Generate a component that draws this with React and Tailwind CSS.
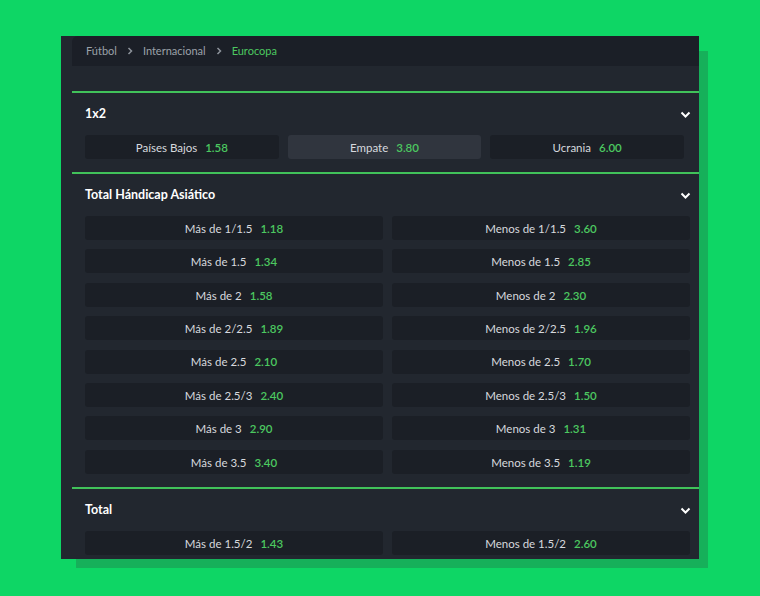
import React from 'react';

const FONT = { fontFamily: 'Lato, "Noto Sans", sans-serif' };

const handicap = [
  ['Más de 1/1.5', '1.18', 'Menos de 1/1.5', '3.60'],
  ['Más de 1.5', '1.34', 'Menos de 1.5', '2.85'],
  ['Más de 2', '1.58', 'Menos de 2', '2.30'],
  ['Más de 2/2.5', '1.89', 'Menos de 2/2.5', '1.96'],
  ['Más de 2.5', '2.10', 'Menos de 2.5', '1.70'],
  ['Más de 2.5/3', '2.40', 'Menos de 2.5/3', '1.50'],
  ['Más de 3', '2.90', 'Menos de 3', '1.31'],
  ['Más de 3.5', '3.40', 'Menos de 3.5', '1.19'],
];

function Crumb() {
  return (
    <svg width="6" height="8" viewBox="0 0 6 8" className="text-[#8d939b]">
      <path d="M1.5 1l3 3-3 3" fill="none" stroke="currentColor" strokeWidth="1.5" />
    </svg>
  );
}

function Chevron() {
  return (
    <svg width="11" height="7" viewBox="0 0 11 7" className="text-white">
      <path d="M1.5 1.5l4 4 4-4" fill="none" stroke="currentColor" strokeWidth="2" />
    </svg>
  );
}

function Odd({ label, price, active }) {
  return (
    <div
      className={`h-[24px] rounded-[3px] flex items-center justify-center gap-[8px] text-[11.5px] pt-[1px] ${
        active ? 'bg-[#30353e]' : 'bg-[#1b1f26]'
      }`}
    >
      <span className="text-[#d7d9de]">{label}</span>
      <span className="text-[#4cc860] font-semibold">{price}</span>
    </div>
  );
}

function Header({ title }) {
  return (
    <div className="h-[42px] flex items-center justify-between pr-[8px] pt-[1px]">
      <span className="text-white text-[12.5px] font-bold">{title}</span>
      <Chevron />
    </div>
  );
}

export default function App() {
  return (
    <div className="w-[760px] h-[596px] bg-[#0ed665] pt-[36px] pl-[61px]" style={FONT}>
      <div className="w-[638px] h-[523px] bg-[#22272f] pl-[11px] overflow-hidden shadow-[12px_12px_0_-3px_#16b05a]">
        <div className="h-[30px] bg-[#1b1f27] rounded-tl-md flex items-center gap-[10px] pl-[14px] text-[11px]">
          <span className="text-[#9ba1a9]">Fútbol</span>
          <Crumb />
          <span className="text-[#9ba1a9]">Internacional</span>
          <Crumb />
          <span className="text-[#4cc860]">Eurocopa</span>
        </div>

        <div className="h-[25px]" />

        <section className="border-t-2 border-[#41c25a] pl-[13px] pb-[13px]">
          <Header title="1x2" />
          <div className="grid grid-cols-3 gap-[9px] pr-[15px]">
            <Odd label="Países Bajos" price="1.58" />
            <Odd label="Empate" price="3.80" active />
            <Odd label="Ucrania" price="6.00" />
          </div>
        </section>

        <section className="border-t-2 border-[#41c25a] pl-[13px] pb-[13px]">
          <Header title="Total Hándicap Asiático" />
          <div className="grid grid-cols-2 gap-x-[9px] gap-y-[9.4px] pr-[9px]">
            {handicap.map((r) => (
              <React.Fragment key={r[0]}>
                <Odd label={r[0]} price={r[1]} />
                <Odd label={r[2]} price={r[3]} />
              </React.Fragment>
            ))}
          </div>
        </section>

        <section className="border-t-2 border-[#41c25a] pl-[13px]">
          <Header title="Total" />
          <div className="grid grid-cols-2 gap-x-[9px] pr-[9px]">
            <Odd label="Más de 1.5/2" price="1.43" />
            <Odd label="Menos de 1.5/2" price="2.60" />
          </div>
        </section>
      </div>
    </div>
  );
}
